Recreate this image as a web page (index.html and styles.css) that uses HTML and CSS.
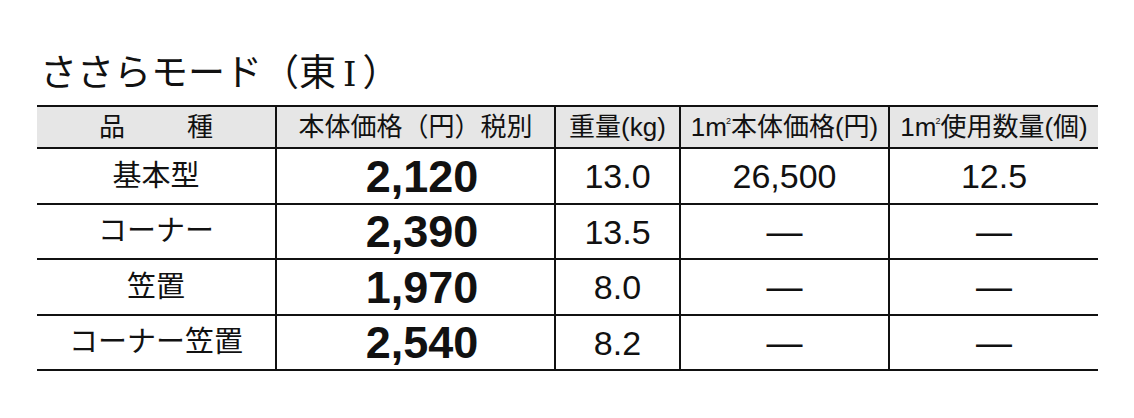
FILE: index.html
```html
<!DOCTYPE html>
<html lang="ja">
<head>
<meta charset="utf-8">
<title>ささらモード（東Ⅰ）</title>
<link rel="stylesheet" href="styles.css">
</head>
<body>
<div class="page">
  <h1 class="title">ささらモード（東<span class="roman">Ⅰ</span>）</h1>
  <table class="spec">
    <colgroup>
      <col class="c-name">
      <col class="c-price">
      <col class="c-weight">
      <col class="c-m2price">
      <col class="c-m2qty">
    </colgroup>
    <thead>
      <tr>
        <th><span class="split"><span>品</span><span>種</span></span></th>
        <th>本体価格（円）税別</th>
        <th>重量(kg)</th>
        <th>1m<span class="sq">2</span>本体価格(円)</th>
        <th>1m<span class="sq">2</span>使用数量(個)</th>
      </tr>
    </thead>
    <tbody>
      <tr class="r-a">
        <td class="name">基本型</td>
        <td class="price">2,120</td>
        <td class="num">13.0</td>
        <td class="num">26,500</td>
        <td class="num">12.5</td>
      </tr>
      <tr class="r-b">
        <td class="name">コーナー</td>
        <td class="price">2,390</td>
        <td class="num">13.5</td>
        <td class="num dash">—</td>
        <td class="num dash">—</td>
      </tr>
      <tr class="r-a">
        <td class="name">笠置</td>
        <td class="price">1,970</td>
        <td class="num">8.0</td>
        <td class="num dash">—</td>
        <td class="num dash">—</td>
      </tr>
      <tr class="r-b">
        <td class="name">コーナー笠置</td>
        <td class="price">2,540</td>
        <td class="num">8.2</td>
        <td class="num dash">—</td>
        <td class="num dash">—</td>
      </tr>
    </tbody>
  </table>
</div>
</body>
</html>
```
FILE: styles.css
```css
html, body {
  margin: 0;
  padding: 0;
  background: #ffffff;
}

.page {
  padding: 52px 0 0 37px;
  color: #111111;
  font-family: "Liberation Sans", "Noto Sans CJK JP", sans-serif;
}

.title {
  margin: 0 0 16px 0;
  padding-left: 3px;
  font-family: "Noto Sans CJK JP", sans-serif;
  font-weight: 400;
  font-size: 37px;
  line-height: 37px;
  height: 37px;
  color: #111111;
}

.roman {
  font-family: "DejaVu Serif", "Noto Sans CJK JP", serif;
  font-size: 34px;
  margin: 0 6px 0 7px;
}

.spec {
  border-collapse: collapse;
  table-layout: fixed;
  width: 1061px;
}

.c-name { width: 239px; }
.c-price { width: 279px; }
.c-weight { width: 125px; }
.c-m2price { width: 209px; }
.c-m2qty { width: 209px; }

.spec th,
.spec td {
  padding: 0;
  text-align: center;
  vertical-align: middle;
  border-bottom: 2px solid #111111;
  border-left: 2px solid #111111;
  white-space: nowrap;
  overflow: hidden;
}

.spec th:first-child,
.spec td:first-child {
  border-left: none;
}

.spec thead tr {
  height: 42px;
}

.spec th {
  background: #e6e6e6;
  border-top: 2px solid #111111;
  font-weight: 400;
  font-size: 26px;
  line-height: 1;
}

.split {
  display: inline-flex;
  gap: 62px;
}

.sq {
  font-size: 9px;
  vertical-align: 12px;
  margin-left: -1px;
}

.r-a { height: 56px; }
.r-b { height: 55px; }

.name {
  font-size: 29px;
  line-height: 1;
}

.spec td.price {
  padding-left: 13px;
  font-weight: 700;
  font-size: 45px;
  line-height: 1;
}

.num {
  font-size: 34px;
  line-height: 1;
}

.dash {
  font-size: 36px;
}
```
